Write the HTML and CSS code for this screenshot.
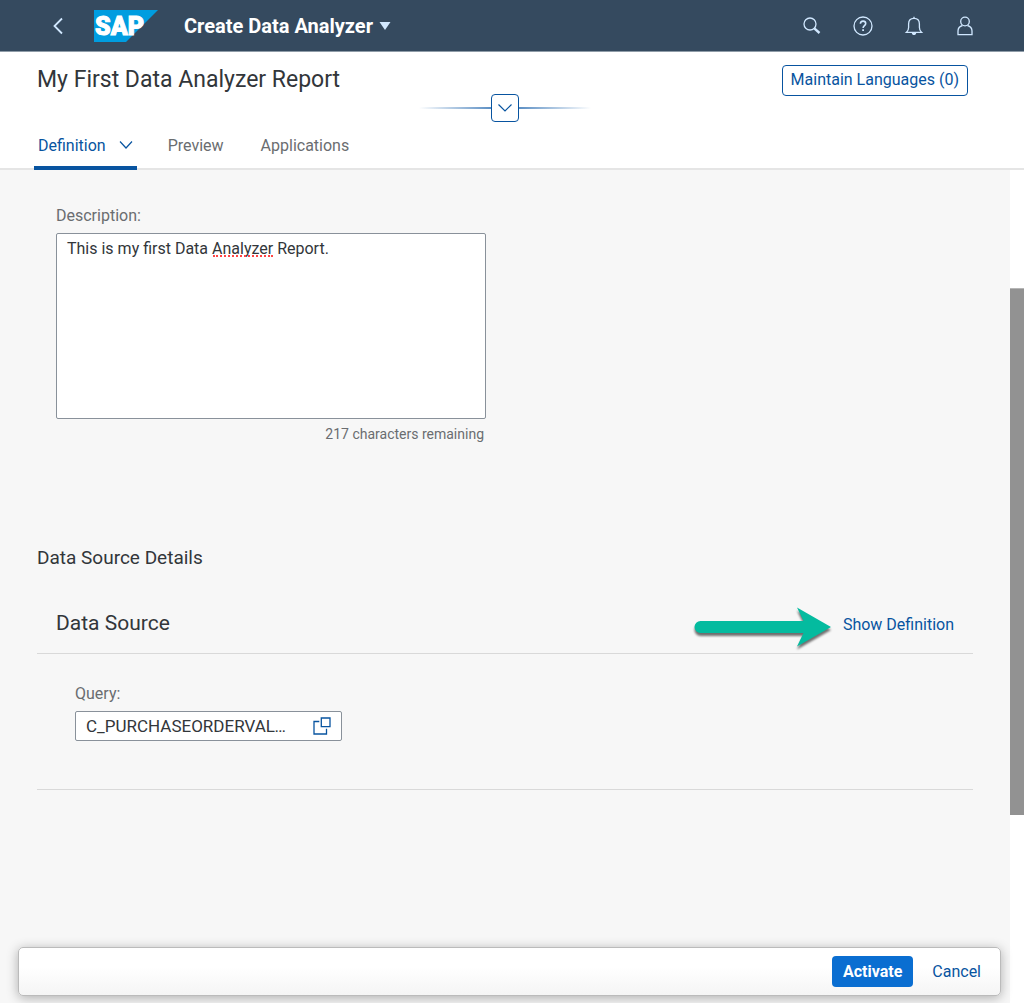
FILE: index.html
```html
<!DOCTYPE html>
<html lang="en">
<head>
<meta charset="utf-8">
<meta name="viewport" content="width=device-width, initial-scale=1">
<title>Create Data Analyzer</title>
<link rel="stylesheet" href="styles.css">
</head>
<body>
<header class="shell">
  <button class="icon-btn back" type="button" aria-label="Back">
    <svg width="12" height="18" viewBox="0 0 12 18"><path d="M10 1.500 2.500 9 10 16.500" fill="none" stroke="currentColor" stroke-width="1.800"/></svg>
  </button>
  <a class="logo" href="#" aria-label="SAP home">
    <svg width="64" height="32" viewBox="0 0 64 32">
      <path d="M0 0H64L32 32H0Z" fill="#009de0"/>
      <text class="logo-text" x="1" y="25">SAP</text>
    </svg>
  </a>
  <button class="app-title" type="button">Create Data Analyzer
    <svg width="12" height="8" viewBox="0 0 12 8"><path d="M.5 0h11L6 8Z" fill="#d1e8ff"/></svg>
  </button>
  <nav class="shell-actions" aria-label="Shell">
    <button class="icon-btn" type="button" aria-label="Search">
      <svg width="20" height="20" viewBox="0 0 20 20" fill="none" stroke="currentColor"><circle cx="8" cy="8" r="6" stroke-width="1.300"/><path d="M12.300 12.300 17.500 17" stroke-width="2.400"/></svg>
    </button>
    <button class="icon-btn" type="button" aria-label="Help">
      <svg width="20" height="20" viewBox="0 0 20 20" fill="none" stroke="currentColor" stroke-width="1.300"><circle cx="10" cy="10" r="9"/><path d="M7.400 7.800c0-1.800 1.100-2.700 2.700-2.700 1.500 0 2.600.9 2.600 2.400 0 2.200-2.600 2.200-2.600 4.500" stroke-width="1.600"/><path d="M9.200 13.300h1.800v1.800H9.200z" fill="currentColor" stroke="none"/></svg>
    </button>
    <button class="icon-btn" type="button" aria-label="Notifications">
      <svg width="20" height="20" viewBox="0 0 20 20" fill="none" stroke="currentColor" stroke-width="1.300"><path d="M2.500 16.300C4 15 4.600 13.800 4.600 11.500V8c0-3.400 2-5.700 5.400-5.700S15.400 4.600 15.400 8v3.500c0 2.300.6 3.500 2.100 4.800Z"/><path d="M10 .8v1.500"/><path d="M7.800 17h4.400c-.2 1.400-1 2-2.200 2s-2-.6-2.200-2Z" fill="currentColor" stroke="none"/></svg>
    </button>
    <button class="icon-btn" type="button" aria-label="User">
      <svg width="20" height="20" viewBox="0 0 20 20" fill="none" stroke="currentColor" stroke-width="1.300"><circle cx="10" cy="5.500" r="4.300"/><path d="M7.500 9.500C4.500 10.300 3 12.400 3 15v3.700h14V15c0-2.600-1.500-4.700-4.500-5.500"/></svg>
    </button>
  </nav>
</header>

<section class="page-head">
  <div class="title-row">
    <h1>My First Data Analyzer Report</h1>
    <button class="btn outlined" type="button">Maintain Languages (0)</button>
  </div>
  <div class="expander">
    <span class="ray ray-left"></span>
    <button class="expand-btn" type="button" aria-label="Expand header">
      <svg width="16" height="10" viewBox="0 0 16 10"><path d="M1.500 1.500 8 8l6.500-6.500" fill="none" stroke="currentColor" stroke-width="1.200"/></svg>
    </button>
    <span class="ray ray-right"></span>
  </div>
  <nav class="tabs" aria-label="Sections">
    <a class="tab active" href="#definition">Definition
      <svg width="14" height="10" viewBox="0 0 14 10"><path d="M1 1.500 7 8l6-6.500" fill="none" stroke="currentColor" stroke-width="1.200"/></svg>
    </a>
    <a class="tab" href="#preview">Preview</a>
    <a class="tab" href="#applications">Applications</a>
  </nav>
</section>

<div class="viewport">
  <main class="content" id="definition">
    <div class="description">
      <label for="description">Description:</label>
      <div class="textarea-wrap">
        <textarea id="description" spellcheck="false">This is my first Data Analyzer Report.</textarea>
        <span class="spelling"></span>
      </div>
      <p class="counter">217 characters remaining</p>
    </div>

    <section class="source">
      <h2>Data Source Details</h2>
      <div class="panel-head">
        <h3>Data Source</h3>
        <svg class="arrow" width="140" height="44" viewBox="0 0 140 44"><path d="M6.500 16H109.500L103 2.500 137 22 103 41.500 109.500 28H6.500a6 6 0 0 1 0-12Z" fill="#04bb9f"/></svg>
        <a class="link" href="#show">Show Definition</a>
      </div>
      <div class="panel-body">
        <label for="query">Query:</label>
        <div class="field">
          <input id="query" type="text" value="C_PURCHASEORDERVALUE_ANALYSIS">
          <button class="value-help" type="button" aria-label="Open value help">
            <svg width="18" height="18" viewBox="0 0 18 18" fill="none" stroke="currentColor" stroke-width="1.300"><path d="M8.300 1h8.700v8.700H8.300z"/><path d="M6.300 4.500H1V17h12.500v-5.300"/></svg>
          </button>
        </div>
      </div>
    </section>

    <footer class="actions">
      <button class="btn primary" type="button">Activate</button>
      <button class="btn plain" type="button">Cancel</button>
    </footer>
  </main>
  <div class="scrollbar"><span class="thumb"></span></div>
</div>
</body>
</html>
```
FILE: styles.css
```css
* { box-sizing: border-box; }

body {
  margin: 0;
  min-height: 100vh;
  display: flex;
  flex-direction: column;
  background: #fff;
  color: #32363a;
  font: 16px/20px Roboto, "Liberation Sans", sans-serif;
}

h1, h2, h3, p { margin: 0; font-weight: 400; }
button { font: inherit; cursor: pointer; }
svg { display: block; }
label { color: #6a6d70; }

/* Shell bar */
.shell {
  display: flex;
  align-items: center;
  height: 52px;
  padding: 0 49px 0 48px;
  background: #354a5f;
  border-bottom: 1px solid #8f9ca8;
  color: #d1e8ff;
}
.icon-btn {
  display: flex;
  padding: 0;
  border: 0;
  background: none;
  color: inherit;
}
.back { padding: 0 4px; }
.logo { margin: 0 26px; }
.logo-text {
  fill: #fff;
  stroke: #fff;
  stroke-width: 1px;
  font: 900 25px Roboto, "Liberation Sans", sans-serif;
}
.app-title {
  display: flex;
  align-items: center;
  gap: 6px;
  padding: 0;
  border: 0;
  background: none;
  color: #fff;
  font-weight: 700;
  font-size: 20px;
}
.shell-actions {
  display: flex;
  gap: 31px;
  margin-left: auto;
}

/* Object page header */
.page-head {
  border-bottom: 2px solid #e5e5e5;
}
.title-row {
  display: flex;
  justify-content: space-between;
  align-items: center;
  padding: 12px 56px 0 37px;
}
h1 { font-size: 23px; line-height: 32px; }

.btn {
  height: 31px;
  padding: 0 10px;
  border: 1px solid transparent;
  border-radius: 4px;
  background: none;
  color: #0854a0;
}
.outlined { border-color: #0854a0; padding: 0 8px; }
.primary {
  background: #0a6ed1;
  color: #fff;
  font-weight: 700;
}

.expander {
  display: flex;
  justify-content: center;
  align-items: center;
  padding-right: 14px;
  margin-top: -2px;
}
.ray { width: 72px; height: 2px; }
.ray-left { background: linear-gradient(to left, #5c8fc4, transparent); }
.ray-right { background: linear-gradient(to right, #5c8fc4, transparent); }
.expand-btn {
  display: grid;
  place-items: center;
  width: 28px;
  height: 28px;
  padding: 0;
  border: 1px solid #0854a0;
  border-radius: 4px;
  background: #fff;
  color: #0854a0;
}

.tabs {
  display: flex;
  gap: 27px;
  padding: 0 34px;
  margin-bottom: -2px;
}
.tab {
  display: flex;
  gap: 13px;
  height: 48px;
  padding: 14px 4px 0;
  border-bottom: 4px solid transparent;
  color: #6a6d70;
  text-decoration: none;
}
.tab svg { margin-top: 4px; }
.tab + .tab { padding-right: 6px; }
.tab.active {
  border-color: #0854a0;
  color: #0854a0;
}

/* Scrolling area */
.viewport { display: flex; flex: 1; }
.content {
  display: flex;
  flex-direction: column;
  flex: 1;
  min-width: 0;
  background: #f7f7f7;
}
.scrollbar {
  display: flex;
  flex-direction: column;
  width: 14px;
}
.scrollbar::before { content: ""; flex: 118; }
.thumb { flex: 527; background: #929292; border-top: 1px solid #b5b5b5; }
.scrollbar::after { content: ""; flex: 188; }

.description {
  width: 430px;
  max-width: 90%;
  margin: 36px 0 0 56px;
}
.description label { display: block; margin-bottom: 7px; }
.textarea-wrap { position: relative; }
textarea {
  display: block;
  width: 100%;
  height: 186px;
  padding: 5px 10px;
  border: 1px solid #89919a;
  border-radius: 2px;
  background: #fff;
  color: inherit;
  font: inherit;
  resize: none;
}
.spelling {
  position: absolute;
  left: 157px;
  top: 22px;
  width: 60px;
  border-bottom: 2px dotted #f44;
}
.counter {
  padding: 5px 2px 0;
  color: #6a6d70;
  font-size: 14px;
  text-align: right;
}

.source { margin: 103px 37px 0; }
h2 { font-size: 19px; line-height: 22px; }
.panel-head {
  display: flex;
  align-items: center;
  height: 62px;
  margin-top: 23px;
  padding: 0 19px;
  border-bottom: 1px solid #d9d9d9;
}
h3 { font-size: 21px; line-height: 24px; }
.arrow {
  margin: 8px 9px 0 auto;
  filter: drop-shadow(0 3px 1px rgba(0, 0, 0, .55));
}
.link { padding-top: 5px; color: #0854a0; text-decoration: none; }
.panel-body {
  padding: 30px 38px 48px;
  border-bottom: 1px solid #d9d9d9;
}
.field {
  display: flex;
  align-items: center;
  width: 267px;
  height: 30px;
  margin-top: 7px;
  border: 1px solid #89919a;
  border-radius: 2px;
  background: #fff;
}
.field input {
  flex: 1;
  min-width: 0;
  padding: 0;
  margin: 0 22px 0 10px;
  border: 0;
  outline: 0;
  background: none;
  color: inherit;
  font: inherit;
  font-size: 17px;
  text-overflow: ellipsis;
}
.value-help {
  padding: 0 10px 0 0;
  border: 0;
  background: none;
  color: #0854a0;
}

.actions {
  display: flex;
  justify-content: flex-end;
  align-items: center;
  gap: 8px;
  height: 49px;
  margin: auto 9px 7px 18px;
  padding: 0 8px;
  border: 1px solid #bbb;
  border-radius: 5px;
  background: linear-gradient(#fff 40%, #f5f5f5);
  box-shadow: 0 2px 12px rgba(0, 0, 0, .3);
}
```
